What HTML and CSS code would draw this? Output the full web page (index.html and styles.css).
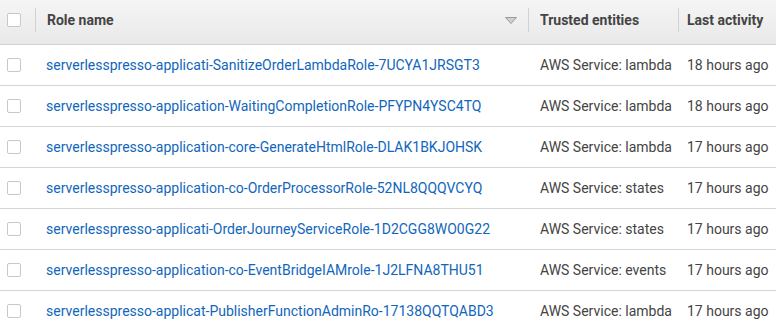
FILE: index.html
```html
<!DOCTYPE html>
<html>
<head>
<meta charset="utf-8">
<link rel="stylesheet" href="styles.css">
</head>
<body>
<table class="roles">
  <thead>
    <tr>
      <th class="c-check"><span class="cb"></span></th>
      <th class="c-name"><div class="hcell"><span>Role name</span><svg class="sort" width="12" height="7" viewBox="0 0 12 7"><path d="M0.5 0.5 L11.5 0.5 L6 6.5 Z" fill="#d0d0d0" stroke="#9a9a9a" stroke-width="1"/></svg></div></th>
      <th class="c-trust"><div class="hcell">Trusted entities</div></th>
      <th class="c-last"><div class="hcell">Last activity</div></th>
    </tr>
  </thead>
  <tbody>
    <tr><td class="c-check"><span class="cb"></span></td><td class="c-name"><a href="#">serverlesspresso-applicati-SanitizeOrderLambdaRole-7UCYA1JRSGT3</a></td><td>AWS Service: lambda</td><td>18 hours ago</td></tr>
    <tr><td class="c-check"><span class="cb"></span></td><td class="c-name"><a href="#">serverlesspresso-application-WaitingCompletionRole-PFYPN4YSC4TQ</a></td><td>AWS Service: lambda</td><td>18 hours ago</td></tr>
    <tr><td class="c-check"><span class="cb"></span></td><td class="c-name"><a href="#">serverlesspresso-application-core-GenerateHtmlRole-DLAK1BKJOHSK</a></td><td>AWS Service: lambda</td><td>17 hours ago</td></tr>
    <tr><td class="c-check"><span class="cb"></span></td><td class="c-name"><a href="#">serverlesspresso-application-co-OrderProcessorRole-52NL8QQQVCYQ</a></td><td>AWS Service: states</td><td>17 hours ago</td></tr>
    <tr><td class="c-check"><span class="cb"></span></td><td class="c-name"><a href="#">serverlesspresso-applicati-OrderJourneyServiceRole-1D2CGG8WO0G22</a></td><td>AWS Service: states</td><td>17 hours ago</td></tr>
    <tr><td class="c-check"><span class="cb"></span></td><td class="c-name"><a href="#">serverlesspresso-application-co-EventBridgeIAMrole-1J2LFNA8THU51</a></td><td>AWS Service: events</td><td>17 hours ago</td></tr>
    <tr><td class="c-check"><span class="cb"></span></td><td class="c-name"><a href="#">serverlesspresso-applicat-PublisherFunctionAdminRo-17138QQTQABD3</a></td><td>AWS Service: lambda</td><td>17 hours ago</td></tr>
  </tbody>
</table>
</body>
</html>
```
FILE: styles.css
```css
html, body {
  margin: 0;
  padding: 0;
  background: #fff;
}
body {
  font-family: Roboto, "Liberation Sans", sans-serif;
  font-size: 14px;
  color: #444;
  overflow: hidden;
}
.roles {
  border-collapse: collapse;
  table-layout: fixed;
  width: 776px;
}
.roles th {
  height: 39px;
  padding: 0 0 5px 0;
  background: linear-gradient(#f5f5f5, #e9e9e9);
  border-bottom: 1px solid #d2d2d2;
  text-align: left;
  font-weight: 700;
  color: #444;
  vertical-align: middle;
}
.roles th.c-check { width: 35px; }
.roles th.c-name { width: 493px; }
.roles th.c-trust { width: 150px; }
.hcell {
  display: flex;
  align-items: center;
  justify-content: space-between;
  height: 24px;
  border-left: 1px solid #d2d2d2;
  padding: 0 11px 0 11px;
}
.c-trust .hcell { padding-left: 11px; }
.c-last .hcell { padding-left: 8px; }
.sort { margin-top: 1px; }
.roles td {
  height: 40px;
  padding: 0;
  border-bottom: 1px solid #d5d5d5;
  vertical-align: middle;
  white-space: nowrap;
  overflow: hidden;
  color: #444;
}
.roles td.c-name { padding-left: 11px; }
.roles tbody td:nth-child(3) { padding-left: 12px; }
.roles tbody td:nth-child(4) { padding-left: 9px; }
.c-check { text-align: left; }
.cb {
  display: block;
  width: 12px;
  height: 12px;
  margin-left: 7px;
  border: 1px solid #c8c8c8;
  border-radius: 2px;
  background: #fff;
}
a {
  color: #1166bb;
  text-decoration: none;
}
```
